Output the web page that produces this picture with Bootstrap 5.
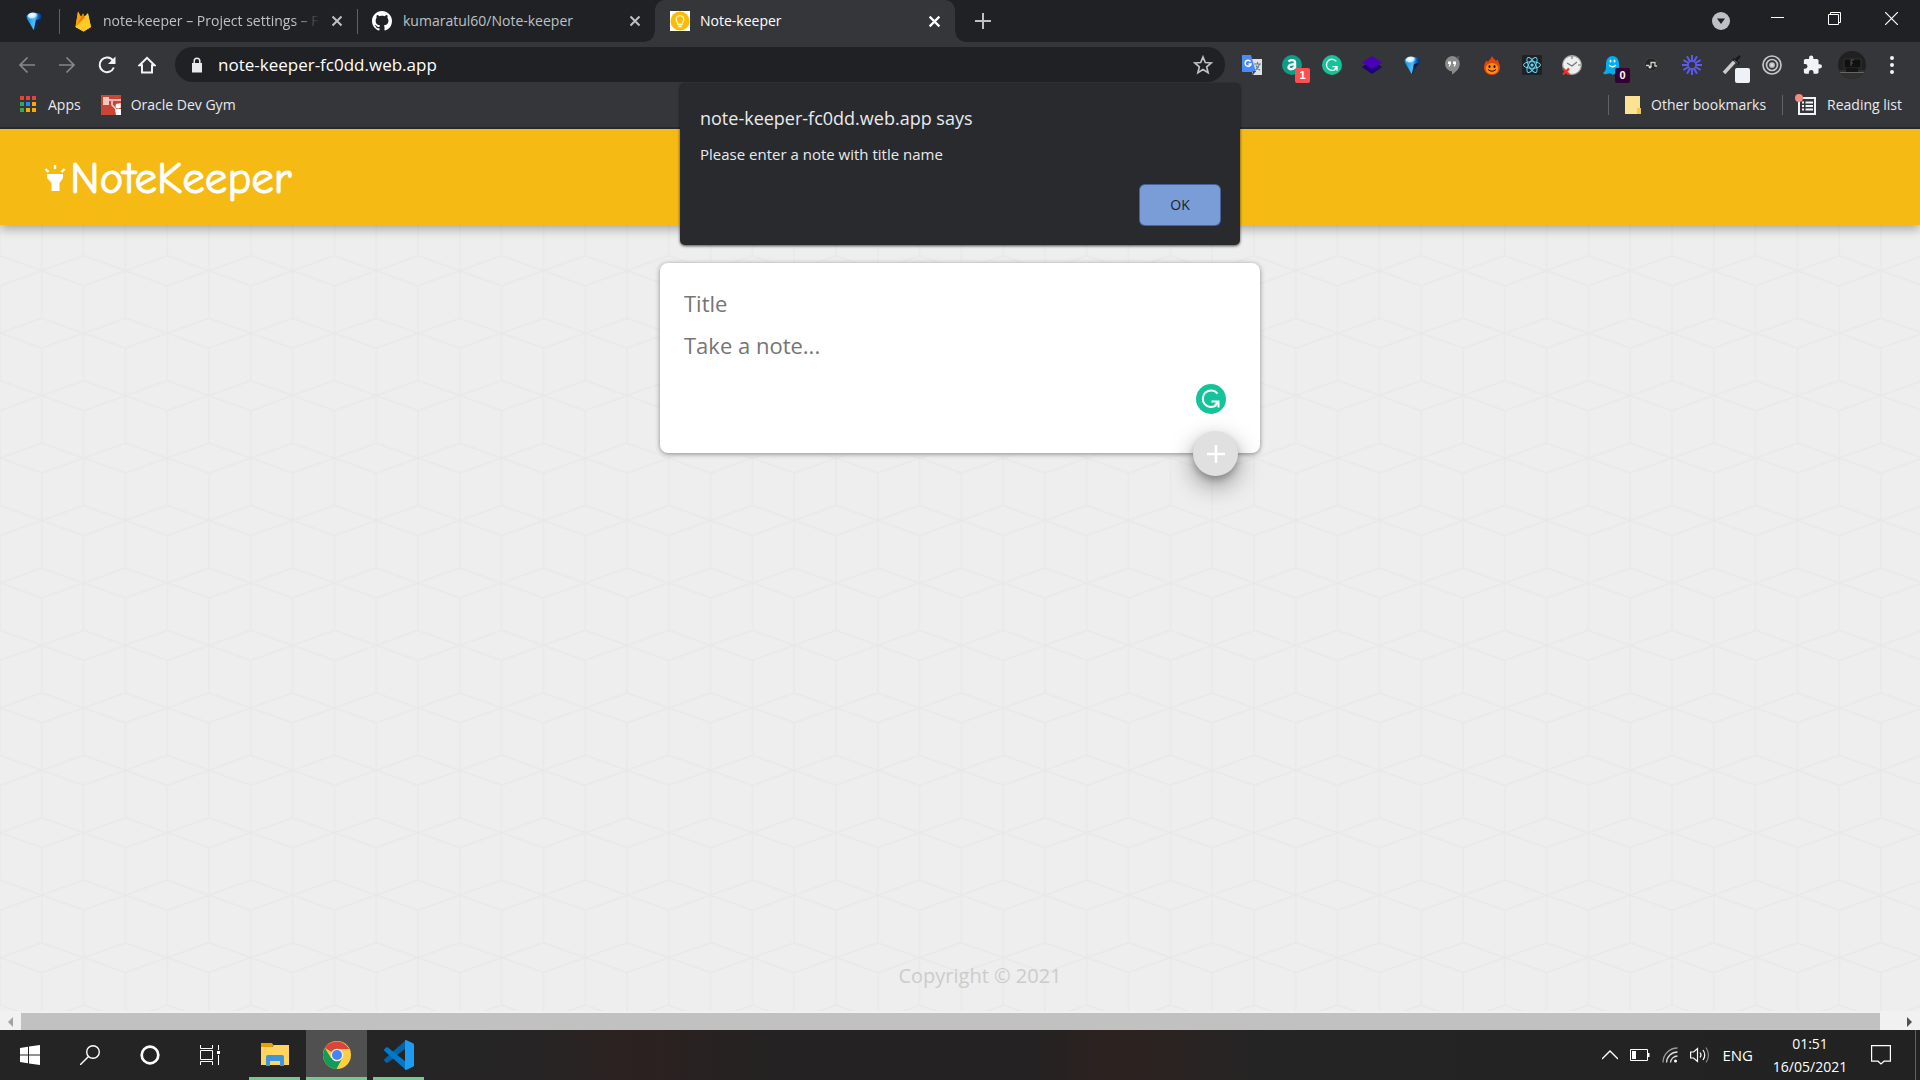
<!DOCTYPE html>
<html lang="en">
<head>
<meta charset="utf-8">
<meta name="viewport" content="width=device-width, initial-scale=1">
<title>Note-keeper</title>
<link href="https://cdn.jsdelivr.net/npm/bootstrap@5.3.0/dist/css/bootstrap.min.css" rel="stylesheet">
<style>
  body { font-family: "Segoe UI", "Open Sans", "Noto Sans", sans-serif; font-size: 15px; line-height: 20px; background: #eee; color: #e8eaed; overflow: hidden; }
  svg { display: block; flex: none; }
  button { padding: 0; border: 0; background: none; color: inherit; }
  a { color: inherit; text-decoration: none; }

  /* browser frame */
  .frame { background: #35363a; border-bottom: 2px solid #28292c; z-index: 3; }
  .tabstrip { height: 42px; background: #202124; color: #bdc1c6; font-size: 14px; }
  .pinned { width: 59px; padding-left: 24px; }
  .tab { width: 297px; padding: 0 14px 0 14px; gap: 11px; }
  .tab .label { flex: 1; overflow: hidden; white-space: nowrap; }
  .tab .fade-out { -webkit-mask-image: linear-gradient(90deg, #000 88%, transparent); mask-image: linear-gradient(90deg, #000 88%, transparent); }
  .divider { width: 1px; height: 25px; background: #5f6368; flex: none; }
  .tab-active { width: 300px; height: 42px; background: #35363a; border-radius: 10px 10px 0 0; color: #fff; padding: 0 14px 0 15px; gap: 10px; }
  .tab-active::before, .tab-active::after { content: ""; position: absolute; bottom: 0; width: 10px; height: 10px; }
  .tab-active::before { left: -10px; background: radial-gradient(circle at 0 0, transparent 9px, #35363a 10px); }
  .tab-active::after { right: -10px; background: radial-gradient(circle at 100% 0, transparent 9px, #35363a 10px); }
  .win { width: 57px; height: 36px; }
  .toolbar { height: 45px; padding: 0 8px 0 7px; }
  .cell { width: 40px; height: 40px; flex: none; }
  .omnibox { height: 35px; border-radius: 18px; background: #202124; margin: 0 7px 0 8px; padding: 0 12px 0 15px; gap: 14px; }
  .omnibox input { flex: 1; min-width: 0; border: 0; outline: 0; background: none; color: #fff; font-size: 17px; padding: 0; }
  .count { left: 23px; bottom: 2px; width: 15px; height: 15px; border-radius: 2px; font: bold 11px/15px "Liberation Sans", sans-serif; }
  .count-red { background: #ff4f4f; }
  .count-plum { background: #330033; }
  .count-pale { background: #eef2f8; }
  .bookmarks { height: 40px; padding: 0 18px 4px 20px; font-size: 14px; }
  .bookmarks a { gap: 10px; }
  .sep { width: 1px; height: 20px; background: #5f6368; }

  /* alert */
  .alertbox { left: 50%; top: 83px; width: 560px; height: 162px; margin-left: -280px; padding: 23px 20px 20px; background: #292a2d; border-radius: 5px; box-shadow: 0 1px 3px rgba(0,0,0,.7); color: #e8eaed; }
  .alertbox h1 { font-size: 18px; line-height: 24px; font-weight: 400; margin: 0 0 14px; }
  .alertbox p { font-size: 15px; margin: 0; }
  .ok { width: 80px; height: 40px; border-radius: 5px; background: #7a9dd8; color: #202124; font-size: 14px; box-shadow: 0 0 0 1px #46639a; }

  /* page */
  .brandbar { height: 96px; padding: 2px 44px 0; background: #f5ba13; box-shadow: 0 4px 10px rgba(0,0,0,.3); z-index: 1; }
  .brandbar h2 { margin: 0; color: #fff; font: 400 45px/60px "Comic Sans MS", "Comic Neue", Lato, cursive; -webkit-text-stroke: 1px #fff; }
  .lattice { inset: 0; }
  .note { width: 600px; height: 190px; margin: 38px auto 0; padding: 19px 24px; background: #fff; border-radius: 8px; box-shadow: 0 1px 5px rgb(138,137,137); }
  .note input, .note textarea { display: block; width: 100%; height: 42px; border: 0; outline: 0; padding: 4px 0; resize: none; background: none; color: #222; font-size: 22px; line-height: 34px; }
  .note textarea { height: 76px; }
  .note ::placeholder { color: #757575; opacity: 1; }
  .grammar { right: 34px; bottom: 39px; }
  .fab { right: 22px; bottom: -23px; width: 45px; height: 45px; border-radius: 50%; background: #e0e0e0; box-shadow: 0 4px 6px rgba(0,0,0,.2), 0 9px 24px rgba(0,0,0,.4); }
  .copy { padding: 0 0 20px 40px; color: #ccc; font-size: 20px; line-height: 30px; }
  .track { height: 19px; padding: 2px 0 0; background: #f1f1f1; }
  .track .arrow { width: 21px; }
  .track .arrow-end { width: 40px; padding-right: 8px; }
  .thumb { background: #c1c1c1; }

  /* taskbar */
  .taskbar { height: 50px; background: linear-gradient(90deg, #242424, #262424 28%, #2c2120 33%, #242222 40%, #242222 54%, #2d2220 58%, #242424 66%, #222); color: #fff; }
  .tb { width: 60px; height: 50px; flex: none; }
  .apps { gap: 6px; margin-left: 9px; }
  .app { height: 50px; border-bottom: 3px solid #76c893; padding-top: 3px; }
  .w-app { width: 51px; }
  .w-on { width: 61px; background: #505050; }
  .clock { font-size: 14px; line-height: 23px; width: 90px; }
  .tray { gap: 12px; }
</style>
<script src="https://cdn.jsdelivr.net/npm/bootstrap@5.3.0/dist/js/bootstrap.bundle.min.js"></script>
</head>
<body class="d-flex flex-column vh-100">

<svg width="0" height="0" class="position-absolute" aria-hidden="true">
  <defs>
    <linearGradient id="gemfill" x1="0" x2="1"><stop offset="0" stop-color="#0c8fe0"/><stop offset=".5" stop-color="#4cc0ff"/><stop offset=".75" stop-color="#0a64c8"/><stop offset="1" stop-color="#032a66"/></linearGradient>
    <radialGradient id="gemtop" cx=".4" cy=".3" r=".6"><stop offset="0" stop-color="#fff"/><stop offset=".6" stop-color="#c4e9ff"/><stop offset="1" stop-color="#3aa8f5" stop-opacity="0"/></radialGradient>
    <symbol id="gem" viewBox="0 0 20 20"><path d="M2.500 5Q4 2 9 2h3q4.500 0 6 3-.5 3-3 6l-4 7q-1 2-2 0L5 11Q2.500 8 2.500 5z" fill="url(#gemfill)"/><path d="M12 9l5-1-2 3-4 7.500q-.8 1-1.200.5z" fill="#061f45"/><ellipse cx="9" cy="5.500" rx="5.500" ry="4" fill="url(#gemtop)"/></symbol>
    <symbol id="grammarly" viewBox="0 0 30 30"><circle cx="15" cy="15" r="15" fill="#15c39a"/><path d="M21.500 9.500A8.300 8.300 0 1 0 20.500 21" fill="none" stroke="#fff" stroke-width="2"/><path d="M15.500 17.500h7V23.500M22.500 17.500 19 21.500" fill="none" stroke="#fff" stroke-width="2"/></symbol>
    <symbol id="cross" viewBox="0 0 12 12"><path d="M1.500 1.500l9 9M10.500 1.500l-9 9" stroke="currentColor" stroke-width="2"/></symbol>
  </defs>
</svg>

<header class="frame position-relative">
  <div class="tabstrip d-flex align-items-center">
    <div class="pinned"><svg width="20" height="20"><use href="#gem"/></svg></div>
    <span class="divider"></span>
    <div class="tab d-flex align-items-center">
      <svg width="18" height="22" viewBox="0 0 18 22"><path d="M1.500 17 4 1.500 7 7 9 3.500l1.500 3L14 3l3 14-7.500 4.500z" fill="#ffca28"/><path d="M1.500 17 4 1.500 7 7z" fill="#ffa000"/><path d="M1.500 17 9 3.500l2.500 5.500z" fill="#f57c00"/><path d="M1.500 17 14 4.500l3 12.500-7.500 4.500z" fill="#ffca28"/></svg>
      <span class="label fade-out">note-keeper – Project settings – F</span>
      <button aria-label="Close tab"><svg width="12" height="12"><use href="#cross"/></svg></button>
    </div>
    <span class="divider"></span>
    <div class="tab d-flex align-items-center">
      <svg width="20" height="20" viewBox="0 0 16 16"><path fill="#fff" d="M8 0C3.580 0 0 3.580 0 8c0 3.540 2.290 6.530 5.470 7.590.4.070.55-.17.55-.38 0-.19-.01-.82-.01-1.490-2.010.37-2.530-.49-2.690-.94-.09-.23-.48-.94-.82-1.130-.28-.15-.68-.52-.01-.53.63-.01 1.080.58 1.230.82.72 1.210 1.870.87 2.330.66.07-.52.28-.87.51-1.070-1.780-.2-3.640-.89-3.640-3.950 0-.87.31-1.590.82-2.150-.08-.2-.36-1.020.08-2.120 0 0 .67-.21 2.200.82.64-.18 1.320-.27 2-.27s1.360.09 2 .27c1.530-1.040 2.200-.82 2.200-.82.44 1.100.16 1.920.08 2.120.51.56.82 1.270.82 2.150 0 3.070-1.870 3.750-3.650 3.950.29.25.54.73.54 1.480 0 1.070-.01 1.930-.01 2.200 0 .21.15.46.55.38A8.010 8.010 0 0 0 16 8c0-4.420-3.580-8-8-8"/></svg>
      <span class="label">kumaratul60/Note-keeper</span>
      <button aria-label="Close tab"><svg width="12" height="12"><use href="#cross"/></svg></button>
    </div>
    <div class="tab-active position-relative d-flex align-items-center">
      <svg width="20" height="20" viewBox="0 0 20 20"><path fill="#fff" d="M0 0h20v20H0z"/><circle cx="10" cy="10" r="9.500" fill="#fbbc04"/><path d="M8 13.500c0-2-1.800-2.700-1.800-5a3.800 3.800 0 0 1 7.600 0c0 2.300-1.800 3-1.800 5zM8.300 15.500h3.400" fill="none" stroke="#fff5d0" stroke-width="1.300"/></svg>
      <span class="flex-grow-1">Note-keeper</span>
      <button aria-label="Close tab"><svg width="13" height="13"><use href="#cross"/></svg></button>
    </div>
    <button class="ms-3 px-1" aria-label="New tab"><svg width="16" height="16" viewBox="0 0 16 16"><path d="M8 0v16M0 8h16" stroke="#bdc1c6" stroke-width="2"/></svg></button>
    <div class="ms-auto d-flex align-items-center align-self-start text-white">
      <button class="win d-grid align-content-end justify-content-center pb-1" aria-label="Search tabs"><svg width="18" height="22" viewBox="0 0 18 22"><circle cx="9" cy="11" r="9" fill="#bdc1c6"/><path d="M5 8.500h8L9 14z" fill="#202124"/></svg></button>
      <button class="win d-grid justify-content-center align-content-center" aria-label="Minimise"><svg width="13" height="13" viewBox="0 0 13 13"><path d="M0 5.500h13" stroke="#fff"/></svg></button>
      <button class="win d-grid justify-content-center align-content-center" aria-label="Restore"><svg width="13" height="13" viewBox="0 0 13 13"><path d="M.5 2.500h10v10H.5zM2.500 2.500v-2h10v10h-2" fill="none" stroke="#fff"/></svg></button>
      <button class="win d-grid justify-content-center align-content-center" aria-label="Close"><svg width="13" height="13" viewBox="0 0 13 13"><path d="M0 0l13 13M13 0 0 13" stroke="#fff" stroke-width="1.200"/></svg></button>
    </div>
  </div>

  <div class="toolbar d-flex align-items-center">
    <button class="cell d-grid justify-content-center align-content-center" aria-label="Back"><svg width="18" height="18" viewBox="0 0 18 18"><path d="M17 9H2M9.500 1.500 2 9l7.500 7.500" fill="none" stroke="#85878a" stroke-width="1.700"/></svg></button>
    <button class="cell d-grid justify-content-center align-content-center" aria-label="Forward"><svg width="18" height="18" viewBox="0 0 18 18"><path d="M1 9h15M8.500 1.500 16 9l-7.500 7.500" fill="none" stroke="#85878a" stroke-width="1.700"/></svg></button>
    <button class="cell d-grid justify-content-center align-content-center" aria-label="Reload"><svg width="18" height="18" viewBox="0 0 18 18"><path d="M15.800 11.500A7.300 7.300 0 1 1 15 4.700" fill="none" stroke="#f1f3f4" stroke-width="2"/><path d="M17.500.5v7.500H10z" fill="#f1f3f4"/></svg></button>
    <button class="cell d-grid justify-content-center align-content-center" aria-label="Home"><svg width="18" height="18" viewBox="0 0 18 18"><path d="M1.500 9.200 9 1.800l7.500 7.400H14V16.500H4V9.200z" fill="none" stroke="#f1f3f4" stroke-width="2"/></svg></button>
    <div class="omnibox flex-grow-1 d-flex align-items-center">
      <svg width="14" height="16" viewBox="0 0 14 16"><path d="M2 6h10v9.500H2z" fill="#e8eaed"/><path d="M4.200 7V4a2.800 2.800 0 0 1 5.600 0v3" fill="none" stroke="#e8eaed" stroke-width="1.500"/></svg>
      <input type="text" aria-label="Address" value="note-keeper-fc0dd.web.app">
      <button aria-label="Bookmark this tab"><svg width="20" height="20" viewBox="0 0 20 20"><path d="M10 2l2.300 5.500 5.900.5-4.500 3.900 1.400 5.800L10 14.600l-5.100 3.100 1.400-5.800L1.800 8l5.900-.5z" fill="none" stroke="#bdc1c6" stroke-width="1.700"/></svg></button>
    </div>
    <button class="cell d-grid justify-content-center align-content-center" aria-label="Translate"><svg width="22" height="22" viewBox="0 0 22 22"><path d="M8 5h13v16H12z" fill="#e1e1e1"/><path d="M1 1h9l5 17H2a1 1 0 0 1-1-1z" fill="#4b8bf5"/><path d="M12 17l3 0-3 4z" fill="#2a3fd0"/><path d="M9.500 7.500A3 3 0 1 0 10 10H7.500" fill="none" stroke="#fff" stroke-width="1.500"/><path d="M13 10h7M16.500 8v2M18.500 10c-.8 3-2.500 5-4 6M15 11.500c.8 2 2.500 4 4 4.800" fill="none" stroke="#607d8b" stroke-width="1.200"/></svg></button>
    <button class="cell position-relative d-grid justify-content-center align-content-center" aria-label="Shopping assistant"><svg width="20" height="20" viewBox="0 0 20 20"><circle cx="10" cy="10" r="10" fill="#0f9d8a"/><path d="M6.500 6.500C8 4.700 13 4.300 13 7.500v6.300M13 9.500c-4-.5-6.500.5-6.500 2.700 0 3 5.500 2.500 6.500-.8" fill="none" stroke="#fff" stroke-width="2.400"/></svg><span class="count count-red position-absolute text-white">1</span></button>
    <button class="cell d-grid justify-content-center align-content-center" aria-label="Grammarly"><svg width="20" height="20"><use href="#grammarly"/></svg></button>
    <button class="cell d-grid justify-content-center align-content-center" aria-label="Layers"><svg width="20" height="20" viewBox="0 0 20 20"><path d="M0 12l10-6 10 6-10 7z" fill="#20007a"/><path d="M0 7.500 10 1l10 6.500L10 14z" fill="#4a00b4"/></svg></button>
    <button class="cell d-grid justify-content-center align-content-center" aria-label="Gem"><svg width="20" height="20"><use href="#gem"/></svg></button>
    <button class="cell d-grid justify-content-center align-content-center" aria-label="Hangouts"><svg width="18" height="20" viewBox="0 0 18 20"><path d="M9 1a7.800 7.800 0 0 1 7.800 7.800C16.800 13 13.500 17 9 19.500v-3A7.800 7.800 0 0 1 9 1z" fill="#8b8b8b"/><path d="M5 6.500h3V9l-1.300 2.500H5.500L6.500 9H5zM10 6.500h3V9l-1.300 2.500h-1.200L11.500 9H10z" fill="#fff"/><circle cx="15" cy="2.500" r="1.500" fill="#555"/></svg></button>
    <button class="cell d-grid justify-content-center align-content-center" aria-label="Flame"><svg width="18" height="20" viewBox="0 0 18 20"><path d="M9 0c0 3 3 4 4 6l1.500-1.500C16 8 17 10 17 12.500 17 17 13.500 20 9 20s-8-3-8-7.500C1 9.500 2 8 3.500 5.500L5 7c1-2 4-4 4-7z" fill="#e8420c"/><ellipse cx="9" cy="13.500" rx="6.300" ry="5.500" fill="#f98e13"/><ellipse cx="6.500" cy="11.500" rx="1" ry="1.500" fill="#301"/><ellipse cx="11.500" cy="11.500" rx="1" ry="1.500" fill="#301"/><path d="M5 14.500q4 3.500 8 0" fill="none" stroke="#301" stroke-width="1"/></svg></button>
    <button class="cell d-grid justify-content-center align-content-center" aria-label="React"><svg width="20" height="20" viewBox="0 0 20 20"><rect width="20" height="20" rx="1" fill="#202124"/><g fill="none" stroke="#61dafb" stroke-width="1"><ellipse cx="10" cy="10" rx="8.500" ry="3.300"/><ellipse cx="10" cy="10" rx="8.500" ry="3.300" transform="rotate(60 10 10)"/><ellipse cx="10" cy="10" rx="8.500" ry="3.300" transform="rotate(120 10 10)"/></g><circle cx="10" cy="10" r="1.600" fill="#61dafb"/></svg></button>
    <button class="cell d-grid justify-content-center align-content-center" aria-label="Clock"><svg width="20" height="20" viewBox="0 0 20 20"><circle cx="10" cy="10" r="9.300" fill="#eee" stroke="#aaa" stroke-width="1.200"/><path d="M10 1v3M19 10h-3M5 8l5 3 5-4" fill="none" stroke="#777" stroke-width="1.200"/><path d="M1 13.500l6 6M7 13.500l-6 6" stroke="#e53422" stroke-width="2.300"/></svg></button>
    <button class="cell position-relative d-grid justify-content-center align-content-center" aria-label="Ghostery"><svg width="20" height="20" viewBox="0 0 20 20"><path d="M4 8a6.500 7 0 0 1 13 0v11l-3-1.500L11 20l-3-2-5 1.500-2-1.500c2-1.500 3-3 3-6z" fill="#00aef0"/><ellipse cx="8.500" cy="6" rx="1" ry="1.600" fill="#fff"/><ellipse cx="12.500" cy="6" rx="1" ry="1.600" fill="#fff"/><path d="M7 10q3.500 3.500 7 0" fill="none" stroke="#fff" stroke-width="1.300"/></svg><span class="count count-plum position-absolute text-white">0</span></button>
    <button class="cell d-grid justify-content-center align-content-center" aria-label="Audio"><svg width="16" height="16" viewBox="0 0 16 16"><circle cx="7" cy="7.500" r="6.500" fill="#262626" stroke="#444"/><path d="M2 8.500h3M7 10V5.500h4.500M11 5v4h2" fill="none" stroke="#ccc" stroke-width="1.300"/><circle cx="6" cy="10" r="1.500" fill="#ddd"/></svg></button>
    <button class="cell d-grid justify-content-center align-content-center" aria-label="Loom"><svg width="20" height="20" viewBox="-10 -10 20 20"><g stroke="#5c5cf5" stroke-width="1.900"><path d="M0-10V10M-10 0H10M-8.700-5 8.700 5M-8.700 5 8.700-5M-5-8.700 5 8.700M-5 8.700 5-8.700"/></g><circle r="4" fill="#35363a" stroke="#5c5cf5" stroke-width="1.500"/></svg></button>
    <button class="cell position-relative d-grid justify-content-center align-content-center" aria-label="Colour picker"><svg width="20" height="20" viewBox="0 0 20 20"><path d="M2 18 13 6" stroke="#ccc" stroke-width="3.500"/><path d="M11 4l6 5M13 6l5-5" stroke="#191919" stroke-width="2.500"/><path d="M12 5l4 3.500" stroke="#777" stroke-width="1"/></svg><span class="count count-pale position-absolute"></span></button>
    <button class="cell d-grid justify-content-center align-content-center" aria-label="Target"><svg width="20" height="20" viewBox="0 0 20 20" fill="none" stroke="#c4c6c8" stroke-width="1.700"><circle cx="10" cy="10" r="9"/><circle cx="10" cy="10" r="5.500"/><circle cx="10" cy="10" r="2" fill="#ddd"/></svg></button>
    <button class="cell d-grid justify-content-center align-content-center" aria-label="Extensions"><svg width="19" height="20" viewBox="1 1 22 22"><path fill="#f1f3f4" d="M20.500 11H19V7c0-1.100-.9-2-2-2h-4V3.500a2.500 2.500 0 0 0-5 0V5H4c-1.100 0-2 .9-2 2v3.800h1.500a2.700 2.700 0 0 1 0 5.400H2V20c0 1.100.9 2 2 2h3.800v-1.500a2.700 2.700 0 0 1 5.400 0V22H17c1.100 0 2-.9 2-2v-4h1.500a2.500 2.500 0 0 0 0-5z"/></svg></button>
    <button class="cell d-grid justify-content-center align-content-center" aria-label="Profile"><svg width="28" height="28" viewBox="0 0 28 28"><defs><clipPath id="face"><circle cx="14" cy="14" r="14"/></clipPath></defs><g clip-path="url(#face)"><path d="M0 0h28v28H0z" fill="#202020"/><path d="M0 19h28v9H0z" fill="#303030"/><path d="M6 8h17v9H6z" fill="#101010" stroke="#333"/><path d="M13 15V9h3M13 12h2" fill="none" stroke="#555"/><path d="M2 21.500h24" stroke="#666"/><path d="M8 17h12v4H8z" fill="#151515"/></g></svg></button>
    <button class="cell d-grid justify-content-center align-content-center" aria-label="Menu"><svg width="4" height="18" viewBox="0 0 4 18" fill="#f1f3f4"><circle cx="2" cy="2" r="2"/><circle cx="2" cy="9" r="2"/><circle cx="2" cy="16" r="2"/></svg></button>
  </div>

  <nav class="bookmarks d-flex align-items-center">
    <a href="#" class="d-flex align-items-center me-3 pe-1"><svg width="18" height="18" viewBox="0 0 18 18"><path d="M0 0h4v4H0zM6 0h4v4H6zM12 0h4v4h-4z" fill="#ea4335"/><path d="M0 6h4v4H0zM0 12h4v4H0z" fill="#34a853"/><path d="M6 6h4v4H6z" fill="#1a8cff"/><path d="M12 6h4v4h-4zM6 12h4v4H6zM12 12h4v4h-4z" fill="#f9ab00"/></svg><span>Apps</span></a>
    <a href="#" class="d-flex align-items-center"><svg width="20" height="20" viewBox="0 0 20 20"><path d="M0 0h20v20H0z" fill="#c74634"/><path d="M2 2h6v8H2z" fill="#f0c8c2"/><path d="M8 5h12M11 6v4l4 4M19 8v5" stroke="#f5dad6" stroke-width="1.500" fill="none"/><circle cx="17" cy="11" r="2.500" fill="#fff"/><path d="M14 14h6v6h-5z" fill="#fff"/></svg><span>Oracle Dev Gym</span></a>
    <span class="sep ms-auto"></span>
    <a href="#" class="d-flex align-items-center ms-3"><svg width="16" height="18" viewBox="0 0 16 18"><path d="M0 0h15v12h1v6H0z" fill="#fde293"/><path d="M12 12h4v6h-4z" fill="#f2c94c"/></svg><span>Other bookmarks</span></a>
    <span class="sep ms-3"></span>
    <a href="#" class="d-flex align-items-center ms-2 ps-1"><svg width="22" height="22" viewBox="0 0 22 22"><path d="M4 4h16v16H4z" fill="none" stroke="#f1f3f4" stroke-width="2"/><path d="M7 8.500h2M7 12h2M7 15.500h2M10.500 8.500H18M10.500 12H18M10.500 15.500H18" stroke="#f1f3f4" stroke-width="2"/><circle cx="4" cy="4" r="4" fill="#f28b82"/></svg><span>Reading list</span></a>
  </nav>

  <div class="alertbox position-absolute d-flex flex-column" role="alertdialog" aria-labelledby="says">
    <h1 id="says">note-keeper-fc0dd.web.app says</h1>
    <p>Please enter a note with title name</p>
    <button class="ok mt-auto ms-auto">OK</button>
  </div>
</header>

<div class="flex-grow-1 d-flex flex-column position-relative">
  <svg class="lattice position-absolute" width="100%" height="100%" aria-hidden="true">
    <defs><pattern id="cubes" width="836" height="1249" patternUnits="userSpaceOnUse" patternTransform="translate(0 141.700) scale(.1)">
      <path d="M0 150V1100M836 150V1100M0 150 418 0 836 150M0-150 418 0 836-150M0 624.500 418 474.500 836 624.500M0 624.500 418 774.500 836 624.500M418 0V474.500M418 774.500V1249M0 1099 418 1249 836 1099M0 1399 418 1249 836 1399" fill="none" stroke="#e8e8e8" stroke-width="14"/></pattern></defs>
    <rect width="100%" height="100%" fill="url(#cubes)"/>
  </svg>
  <div class="brandbar position-relative d-flex align-items-center">
    <svg width="22" height="28" viewBox="0 0 22 28" fill="#fff"><path d="M3 10h16v4l-3.500 5v8h-8v-8L3 14z"/><path d="M11 1v4M1.500 5l3 3M20.500 5l-3 3" stroke="#fff" stroke-width="2.400"/></svg>
    <h2 class="ms-1">NoteKeeper</h2>
  </div>
  <form class="note position-relative">
    <input type="text" name="title" placeholder="Title" aria-label="Title">
    <textarea name="content" rows="2" placeholder="Take a note..." aria-label="Take a note"></textarea>
    <svg class="grammar position-absolute" width="30" height="30"><use href="#grammarly"/></svg>
    <button type="button" class="fab position-absolute d-grid justify-content-center align-content-center" aria-label="Add"><svg width="18" height="18" viewBox="0 0 18 18"><path d="M9 0v18M0 9h18" stroke="#fff" stroke-width="2.400"/></svg></button>
  </form>
  <footer class="copy mt-auto text-center position-relative">Copyright © 2021</footer>
</div>

<div class="track d-flex">
  <div class="arrow d-flex align-items-center justify-content-center"><svg width="5" height="10" viewBox="0 0 5 10"><path d="M5 0v10L0 5z" fill="#a3a3a3"/></svg></div>
  <div class="thumb flex-grow-1"></div>
  <div class="arrow-end d-flex align-items-center justify-content-end"><svg width="5" height="10" viewBox="0 0 5 10"><path d="M0 0v10l5-5z" fill="#505050"/></svg></div>
</div>

<footer class="taskbar d-flex align-items-center">
  <button class="tb d-grid justify-content-center align-content-center" aria-label="Start"><svg width="20" height="20" viewBox="0 0 20 20" fill="#fff"><path d="M0 3l8-1.200V9.500H0zM9 1.600 20 0v9.500H9zM0 10.500h8v7.700L0 17zM9 10.500h11V20L9 18.400z"/></svg></button>
  <button class="tb d-grid justify-content-center align-content-center" aria-label="Search"><svg width="20" height="20" viewBox="0 0 20 20" fill="none" stroke="#fff" stroke-width="1.400"><circle cx="13" cy="7" r="6.300"/><path d="M8.500 11.500 0 20"/></svg></button>
  <button class="tb d-grid justify-content-center align-content-center" aria-label="Cortana"><svg width="20" height="20" viewBox="0 0 20 20"><circle cx="10" cy="10" r="8.300" fill="none" stroke="#fff" stroke-width="2.700"/></svg></button>
  <button class="tb d-grid justify-content-center align-content-center" aria-label="Task view"><svg width="20" height="20" viewBox="0 0 20 20" fill="none" stroke="#fff"><path d="M.5 5.500h12v9H.5zM.5 0v3.500h12V0M.5 20v-3.500h12V20M18.500 0v5M18.500 10v10"/><path d="M17 6h3v3h-3z" fill="#fff" stroke="none"/></svg></button>
  <div class="apps d-flex">
  <button class="app w-app d-grid justify-content-center align-content-center" aria-label="File Explorer"><svg width="28" height="24" viewBox="0 0 28 24"><path d="M0 0h11l2 3h-2v3H0z" fill="#e8a000"/><path d="M0 4h11l2-2h15v20H0z" fill="#ffd460"/><path d="M5 23V14q0-2 2-2h14q2 0 2 2v9h-4v-5h-10v5z" fill="#3a96dd"/></svg></button>
  <button class="app w-on d-grid justify-content-center align-content-center" aria-label="Chrome"><svg width="28" height="28" viewBox="0 0 28 28"><circle cx="14" cy="14" r="14" fill="#ffcd40"/><path d="M14 14 1.900 7A14 14 0 0 1 26.100 8H14z" fill="#db4437"/><path d="M1.900 7A14 14 0 0 0 13.500 28l5.500-10.500L8 17z" fill="#0f9d58"/><circle cx="14" cy="14" r="6.300" fill="#f1f1f1"/><circle cx="14" cy="14" r="5" fill="#4285f4"/></svg></button>
  <button class="app w-app d-grid justify-content-center align-content-center" aria-label="Visual Studio Code"><svg width="30" height="30" viewBox="0 0 30 30"><path d="M22 0v8L4 22.500q-1 .7-2 0L.5 21q-1-1 0-2z" fill="#0065a9"/><path d="M22 30v-8L4 7.500q-1-.7-2 0L.5 9q-1 1 0 2z" fill="#007acc"/><path d="M22 0l7 3.200q1 .5 1 1.600v20.400q0 1.100-1 1.600L22 30q-1 .2-1-1V1q0-1.200 1-1z" fill="#1f9cf0"/></svg></button>
  </div>

  <div class="tray ms-auto d-flex align-items-center align-self-stretch">
    <svg width="16" height="10" viewBox="0 0 16 10"><path d="M0 9l8-8 8 8" fill="none" stroke="#fff" stroke-width="1.400"/></svg>
    <svg width="20" height="12" viewBox="0 0 20 12"><path d="M.5.500h17v11H.5z" fill="none" stroke="#fff"/><path d="M2 2h4v8H2zM18 4h1.500v4H18z" fill="#fff"/></svg>
    <svg width="16" height="16" viewBox="0 0 16 16" fill="none" stroke="#ddd" stroke-width="1.300"><path d="M1 15.500A14.500 14.500 0 0 1 15.500 1" stroke="#999"/><path d="M4.500 15.500a11 11 0 0 1 11-10.500M8.500 15.500a7 7 0 0 1 7-6.500"/><circle cx="13.500" cy="14" r="1.500" fill="#fff" stroke="none"/></svg>
    <svg width="20" height="18" viewBox="0 0 20 18" fill="none" stroke="#fff" stroke-width="1.200"><path d="M.6 6h3L7.500 2.500v13L3.600 12h-3zM10 6.500q2 2.500 0 5M13 4q3.500 5 0 10"/><path d="M16 1.500q5 7.500 0 15" stroke="#888"/></svg>
    <span>ENG</span>
    <div class="clock text-center">01:51<br>16/05/2021</div>
    <svg width="20" height="20" viewBox="0 0 20 20" class="ms-1 me-2" fill="none" stroke="#fff" stroke-width="1.200"><path d="M.6.600h18.800v15.600H13L10 19l-3-2.800H.6z"/></svg>
    <span class="divider h-auto align-self-stretch ms-1 me-1"></span>
  </div>
</footer>
</body>
</html>
